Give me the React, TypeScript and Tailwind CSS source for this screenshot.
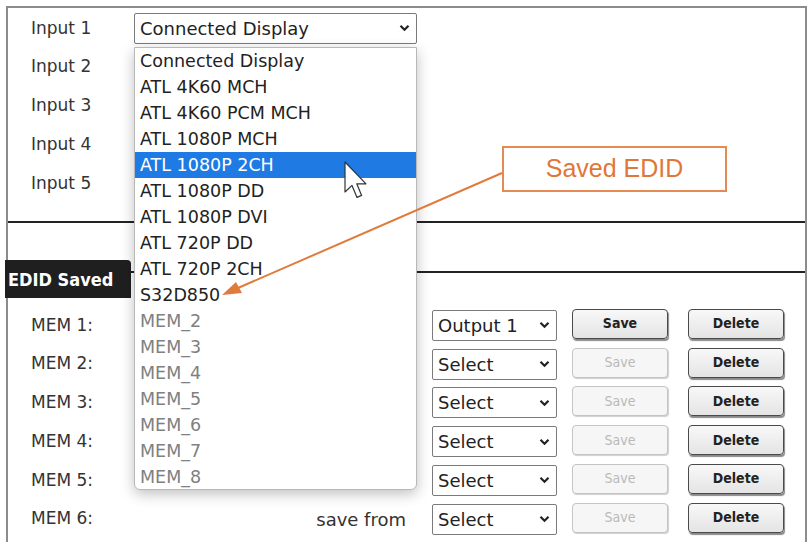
import React from "react";

const F = "[font-family:'DejaVu_Sans',sans-serif]";
const FC = "[font-family:'DejaVu_Sans_Condensed','DejaVu_Sans',sans-serif]";

function Chevron() {
  return (
    <svg width="11" height="8" viewBox="0 0 11 8" className="shrink-0">
      <path d="M1.5 1.8 L5.5 5.8 L9.5 1.8" fill="none" stroke="#222" strokeWidth="2.2" />
    </svg>
  );
}

function SelectBox({ text, w }: { text: string; w: string }) {
  return (
    <div
      className={`${w} h-[31px] border border-[#7a7a7a] rounded-[2px] bg-white flex items-center justify-between pl-[5px] pr-[6px] text-[18px] text-[#222]`}
    >
      <span>{text}</span>
      <Chevron />
    </div>
  );
}

function Btn({ label, disabled }: { label: string; disabled?: boolean }) {
  return (
    <div
      className={
        disabled
          ? `w-[96px] h-[30px] rounded-[4px] border border-[#c4c4c4] bg-[#f6f6f6] shadow-[1px_1px_1px_#d0d0d0] flex items-center justify-center text-[14px] text-[#b9b9b9] ${FC}`
          : `w-[96px] h-[30px] rounded-[4px] border border-[#4a4a4a] bg-gradient-to-b from-[#f8f8f8] to-[#e4e4e4] shadow-[1px_2px_1px_#8a8a8a] flex items-center justify-center text-[14px] font-bold text-[#222] ${FC}`
      }
    >
      {label}
    </div>
  );
}

const options = [
  "Connected Display",
  "ATL 4K60 MCH",
  "ATL 4K60 PCM MCH",
  "ATL 1080P MCH",
  "ATL 1080P 2CH",
  "ATL 1080P DD",
  "ATL 1080P DVI",
  "ATL 720P DD",
  "ATL 720P 2CH",
  "S32D850",
  "MEM_2",
  "MEM_3",
  "MEM_4",
  "MEM_5",
  "MEM_6",
  "MEM_7",
  "MEM_8",
];

const mems = [
  { sel: "Output 1", enabled: true },
  { sel: "Select", enabled: false },
  { sel: "Select", enabled: false },
  { sel: "Select", enabled: false },
  { sel: "Select", enabled: false },
  { sel: "Select", enabled: false },
];

export default function App() {
  return (
    <div className={`relative w-[809px] h-[542px] overflow-hidden bg-white ${F}`}>
      <div className="mt-[6px] ml-[6px] w-[801px] h-[560px] border-l-2 border-t-2 border-r-2 border-[#8c8c8c]">
        {/* Input rows */}
        <div className="h-[215px] border-b-2 border-[#222] pt-[1px]">
          {[1, 2, 3, 4, 5].map((n) => (
            <div key={n} className="h-[38.75px] flex items-center">
              <div className="w-[126px] pl-[23px] text-[17px] text-[#333]">Input {n}</div>
              {n === 1 && <SelectBox text="Connected Display" w="w-[283px]" />}
            </div>
          ))}
        </div>
        <div className="h-[50px] border-b-2 border-[#222]" />
        {/* EDID saved tab */}
        <div className={`relative -mt-[13px] -ml-[3px] w-[126px] h-[38px] bg-[#1f1f1f] rounded-tr-[4px] flex items-center pl-[3px] text-[18px] font-bold text-white ${FC}`}>
          EDID Saved
        </div>
        <div className="pt-[8px]">
          {mems.map((m, i) => (
            <div key={i} className="h-[38.75px] flex items-center">
              <div className="w-[424px] pl-[23px] pr-[26px] flex items-center justify-between text-[17px] text-[#333]">
                <span>MEM {i + 1}:</span>
                {i === 5 && <span className="text-[18px]">save from</span>}
              </div>
              <SelectBox text={m.sel} w="w-[125px]" />
              <div className="ml-[15px] -mt-[3px]">
                <Btn label="Save" disabled={!m.enabled} />
              </div>
              <div className="ml-[20px] -mt-[3px]">
                <Btn label="Delete" />
              </div>
            </div>
          ))}
        </div>
      </div>

      {/* Open dropdown list */}
      <div className="absolute left-[134px] top-[47px] w-[283px] h-[443px] bg-white border border-[#b8b8b8] rounded-b-[6px] shadow-[0_4px_14px_rgba(0,0,0,0.25)] overflow-hidden">
        {options.map((o, i) => (
          <div
            key={o}
            className={
              i === 4
                ? "h-[26px] flex items-center pl-[5px] text-[17.5px] bg-[#1f7be3] text-white"
                : i >= 10
                ? "h-[26px] flex items-center pl-[5px] text-[17.5px] text-[#808080]"
                : "h-[26px] flex items-center pl-[5px] text-[17.5px] text-[#222]"
            }
          >
            {o}
          </div>
        ))}
      </div>

      {/* Mouse cursor */}
      <svg className="absolute left-[344px] top-[161px]" width="26" height="40" viewBox="0 0 13 20">
        <path
          d="M0.5 0.5 L0.5 15.5 L4 12.2 L6.5 18.2 L8.8 17.2 L6.4 11.4 L11 11.4 Z"
          fill="white"
          stroke="#333"
          strokeWidth="0.6"
          strokeLinejoin="round"
        />
      </svg>

      {/* Callout arrow */}
      <svg className="absolute left-0 top-0 pointer-events-none" width="809" height="542">
        <line x1="502" y1="173" x2="238" y2="288" stroke="#e07b3c" strokeWidth="2" />
        <polygon points="222,295 236,282 242,293" fill="#e07b3c" />
      </svg>

      {/* Callout box */}
      <div className="absolute left-[502px] top-[146px] w-[225px] h-[46px] border-2 border-[#e58a52] bg-white flex items-center justify-center text-[25px] text-[#e0773a] [font-family:'Liberation_Sans',Arial,sans-serif]">
        Saved EDID
      </div>
    </div>
  );
}
